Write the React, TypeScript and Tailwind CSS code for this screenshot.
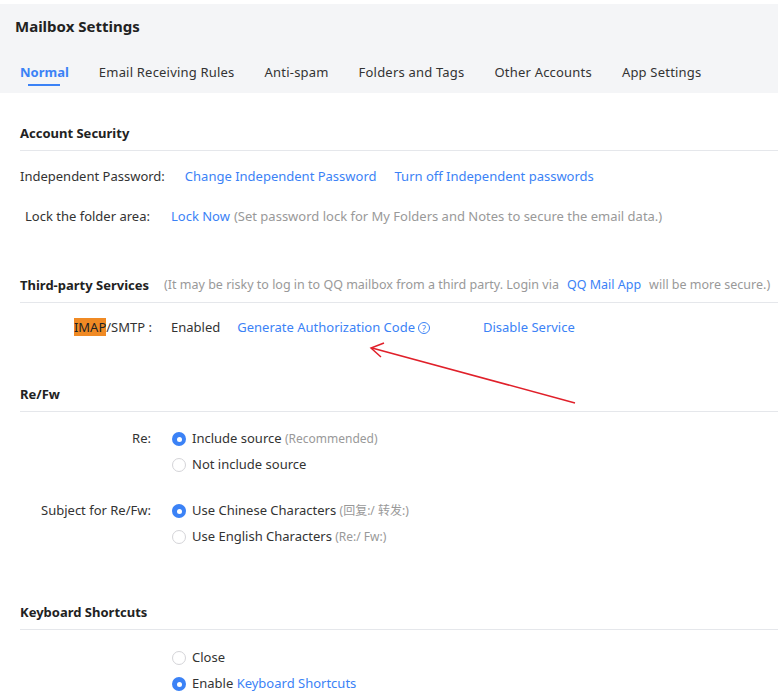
import React from 'react';

const Radio = ({ on }: { on?: boolean }) =>
  on ? (
    <span className="w-[14px] h-[14px] rounded-full bg-[#3b82f6] flex items-center justify-center shrink-0">
      <span className="w-[5px] h-[5px] rounded-full bg-white" />
    </span>
  ) : (
    <span className="w-[14px] h-[14px] rounded-full border border-[#d4d4d8] bg-white shrink-0" />
  );

const Heading = ({ children }: { children: React.ReactNode }) => (
  <div className="flex items-center h-[34px] border-b border-[#e5e7eb] text-[13px] font-bold text-[#222]">
    {children}
  </div>
);

const Opt = ({ on, children }: { on?: boolean; children: React.ReactNode }) => (
  <div className="flex items-center h-[26px] gap-[6px] text-[13px] text-[#333]">
    <Radio on={on} />
    <span>{children}</span>
  </div>
);

const Group = ({ label, children }: { label: string; children: React.ReactNode }) => (
  <div className="flex">
    <span className="w-[131px] shrink-0 h-[26px] flex items-center justify-end whitespace-nowrap">{label}</span>
    <div className="ml-[21px]">{children}</div>
  </div>
);

export default function App() {
  const tabs = ['Normal', 'Email Receiving Rules', 'Anti-spam', 'Folders and Tags', 'Other Accounts', 'App Settings'];
  return (
    <div className="relative w-[778px] h-[696px] bg-white overflow-hidden" style={{ fontFamily: '"Noto Sans", "Noto Sans CJK SC", sans-serif' }}>
      <div className="mt-[4px] bg-[#f4f5f7] h-[89px] px-[15px]">
        <div className="pt-[11px] text-[15px] font-bold text-[#222]">Mailbox Settings</div>
        <div className="flex gap-[30px] mt-[25px] px-[5px] text-[13px] text-[#333]">
          {tabs.map((t, i) => (
            <div key={t} className={i === 0 ? 'flex flex-col items-center text-[#3b82f6] font-bold' : 'tracking-[0.2px]'}>
              <span>{t}</span>
              {i === 0 && <span className="mt-[2px] h-[2px] w-[32px] bg-[#3b82f6]" />}
            </div>
          ))}
        </div>
      </div>

      <div className="pl-[20px] pt-[24px] text-[13px] text-[#333]">
        <Heading>Account Security</Heading>
        <div className="flex items-center h-[40px] mt-[6px]">
          <span className="mr-[20px]">Independent Password:</span>
          <span className="text-[#3b82f6] mr-[18px]">Change Independent Password</span>
          <span className="text-[#3b82f6]">Turn off Independent passwords</span>
        </div>
        <div className="flex items-center h-[40px] pl-[5px]">
          <span className="mr-[21px]">Lock the folder area:</span>
          <span className="text-[#3b82f6] mr-[4px]">Lock Now</span>
          <span className="text-[#999]">(Set password lock for My Folders and Notes to secure the email data.)</span>
        </div>

        <div className="mt-[32px]">
          <Heading>
            Third-party Services
            <span className="font-normal text-[#999] ml-[15px] text-[12.5px] whitespace-nowrap">
              (It may be risky to log in to QQ mailbox from a third party. Login via
              <span className="text-[#3b82f6] mx-[8px]">QQ Mail App</span>
              will be more secure.)
            </span>
          </Heading>
        </div>
        <div className="flex items-center h-[50px]">
          <span className="w-[132px] text-right">
            <span className="bg-[#f08a24] text-[#222]">IMAP</span>/SMTP :
          </span>
          <span className="ml-[19px]">Enabled</span>
          <span className="ml-[17px] text-[#3b82f6] flex items-center gap-[3px]">
            Generate Authorization Code
            <span className="w-[12px] h-[12px] rounded-full border border-[#3b82f6] text-[9px] leading-none flex items-center justify-center">?</span>
          </span>
          <span className="ml-[53px] text-[#3b82f6]">Disable Service</span>
        </div>

        <div className="mt-[25px]">
          <Heading>Re/Fw</Heading>
        </div>
        <div className="mt-[14px]">
          <Group label="Re:">
            <Opt on>Include source <span className="text-[#999] text-[12px]">(Recommended)</span></Opt>
            <Opt>Not include source</Opt>
          </Group>
        </div>
        <div className="mt-[20px]">
          <Group label="Subject for Re/Fw:">
            <Opt on>Use Chinese Characters <span className="text-[#999] text-[12px]">(回复:/ 转发:)</span></Opt>
            <Opt>Use English Characters <span className="text-[#999] text-[12px]">(Re:/ Fw:)</span></Opt>
          </Group>
        </div>

        <div className="mt-[46px]">
          <Heading>Keyboard Shortcuts</Heading>
        </div>
        <div className="pl-[152px] mt-[15px]">
          <Opt>Close</Opt>
          <Opt on>Enable <span className="text-[#3b82f6]">Keyboard Shortcuts</span></Opt>
        </div>
      </div>

      <svg className="absolute left-0 top-0 pointer-events-none" width="778" height="696">
        <line x1="575" y1="403" x2="372" y2="348" stroke="#e0202a" strokeWidth="1.5" />
        <polyline points="384,343 371,348 381,357" fill="none" stroke="#e0202a" strokeWidth="1.5" />
      </svg>
    </div>
  );
}
